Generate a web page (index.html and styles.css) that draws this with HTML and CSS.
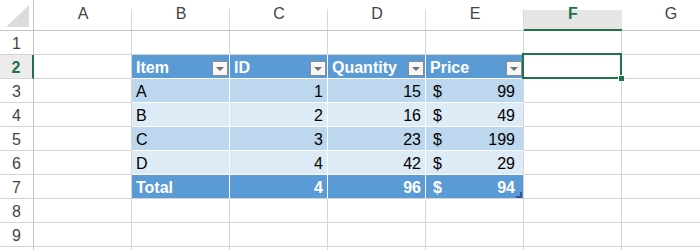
FILE: index.html
```html
<!DOCTYPE html>
<html lang="en">
<head>
  <meta charset="UTF-8">
  <title>Sheet</title>
  <link rel="stylesheet" href="styles.css">
</head>
<body>
  <div class="sheet">
    <!-- column headers -->
    <div class="corner">
      <svg width="34" height="31" viewBox="0 0 34 31"><polygon points="29,5 29,27 6,27" fill="#dcdcdc"/></svg>
    </div>
    <div class="ch">A</div>
    <div class="ch">B</div>
    <div class="ch">C</div>
    <div class="ch">D</div>
    <div class="ch">E</div>
    <div class="ch ch-active">F</div>
    <div class="ch">G</div>

    <!-- row 1 -->
    <div class="rh">1</div>
    <div class="c"></div><div class="c"></div><div class="c"></div><div class="c"></div><div class="c"></div><div class="c"></div><div class="c"></div>

    <!-- row 2 -->
    <div class="rh rh-active">2</div>
    <div class="c"></div>
    <div class="c th"><span>Item</span><span class="dd"></span></div>
    <div class="c th"><span>ID</span><span class="dd"></span></div>
    <div class="c th"><span>Quantity</span><span class="dd"></span></div>
    <div class="c th last"><span>Price</span><span class="dd"></span></div>
    <div class="c selected"><span class="handle"></span></div>
    <div class="c"></div>

    <!-- row 3 -->
    <div class="rh">3</div>
    <div class="c"></div>
    <div class="c td dark">A</div>
    <div class="c td dark num">1</div>
    <div class="c td dark num">15</div>
    <div class="c td dark last price"><span>$</span><span>99</span></div>
    <div class="c"></div><div class="c"></div>

    <!-- row 4 -->
    <div class="rh">4</div>
    <div class="c"></div>
    <div class="c td light">B</div>
    <div class="c td light num">2</div>
    <div class="c td light num">16</div>
    <div class="c td light last price"><span>$</span><span>49</span></div>
    <div class="c"></div><div class="c"></div>

    <!-- row 5 -->
    <div class="rh">5</div>
    <div class="c"></div>
    <div class="c td dark">C</div>
    <div class="c td dark num">3</div>
    <div class="c td dark num">23</div>
    <div class="c td dark last price"><span>$</span><span>199</span></div>
    <div class="c"></div><div class="c"></div>

    <!-- row 6 -->
    <div class="rh">6</div>
    <div class="c"></div>
    <div class="c td light">D</div>
    <div class="c td light num">4</div>
    <div class="c td light num">42</div>
    <div class="c td light last price"><span>$</span><span>29</span></div>
    <div class="c"></div><div class="c"></div>

    <!-- row 7: totals -->
    <div class="rh">7</div>
    <div class="c"></div>
    <div class="c total">Total</div>
    <div class="c total num">4</div>
    <div class="c total num">96</div>
    <div class="c total last price"><span>$</span><span>94</span>
      <svg class="resize" width="6" height="6" viewBox="0 0 6 6"><path d="M6 0V6H0V4H4V0Z" fill="#3b4ba3"/></svg>
    </div>
    <div class="c"></div><div class="c"></div>

    <!-- rows 8-9, and the top of the next row -->
    <div class="rh">8</div>
    <div class="c"></div><div class="c"></div><div class="c"></div><div class="c"></div><div class="c"></div><div class="c"></div><div class="c"></div>
    <div class="rh">9</div>
    <div class="c"></div><div class="c"></div><div class="c"></div><div class="c"></div><div class="c"></div><div class="c"></div><div class="c"></div>
    <div class="rh"></div>
    <div class="c"></div><div class="c"></div><div class="c"></div><div class="c"></div><div class="c"></div><div class="c"></div><div class="c"></div>
  </div>
</body>
</html>
```

FILE: styles.css
```css
body {
  margin: 0;
  overflow: hidden;
  background-color: #fff;
  font-family: 'Liberation Sans', Arial, sans-serif;
  font-size: 16px;
  color: #000;
}
.sheet {
  display: grid;
  grid-template-columns: 34px repeat(7, 98px);
  grid-template-rows: 31px;
  grid-auto-rows: 24px;
  width: 720px;
}
.corner {
  border-right: 1px solid #c6c6c6;
  border-bottom: 1px solid #c6c6c6;
  box-sizing: border-box;
}
.corner svg {
  display: block;
}
.ch {
  box-sizing: border-box;
  border-bottom: 1px solid #c6c6c6;
  padding-top: 3px;
  line-height: 21px;
  text-align: center;
  color: #444;
  background: linear-gradient(#d8d8d8, #d8d8d8) right bottom / 1px 21px no-repeat;
}
.ch-active {
  background: linear-gradient(#fff, #fff) top / 100% 10px no-repeat, #e6e6e6;
  border-bottom: 2px solid #217346;
  color: #217346;
  font-weight: bold;
}
.rh {
  box-sizing: border-box;
  border-right: 1px solid #c6c6c6;
  border-bottom: 1px solid #d4d4d4;
  padding-top: 2px;
  line-height: 21px;
  text-align: center;
  color: #444;
}
.rh-active {
  background-color: #ececec;
  border-right: 2px solid #217346;
  color: #217346;
  font-weight: bold;
}
.c {
  box-sizing: border-box;
  border-right: 1px solid #d4d4d4;
  border-bottom: 1px solid #d4d4d4;
  padding: 2px 4px 0;
  line-height: 21px;
  white-space: nowrap;
  overflow: hidden;
}
.td, .th {
  border-right-color: #fff;
  border-bottom-color: #fff;
}
.th, .total {
  background-color: #5b9bd5;
  color: #fff;
  font-weight: bold;
}
.total {
  border-right-color: #fff;
}
.last {
  border-right-color: #d4d4d4;
}
.th {
  display: flex;
  justify-content: space-between;
  align-items: flex-start;
  padding-right: 1px;
}
.dark {
  background-color: #bdd7ee;
}
.light {
  background-color: #ddebf7;
}
.num {
  text-align: right;
}
.price {
  display: flex;
  justify-content: space-between;
  padding-left: 7px;
  padding-right: 8px;
}
.dd {
  position: relative;
  width: 16px;
  height: 15px;
  margin-top: 4px;
  box-sizing: border-box;
  border: 1px solid #8c8c8c;
  background-color: #f7f7f7;
}
.dd::after {
  content: '';
  position: absolute;
  left: 3px;
  top: 5px;
  border-left: 4px solid transparent;
  border-right: 4px solid transparent;
  border-top: 4px solid #707070;
}
.selected {
  position: relative;
  overflow: visible;
}
.selected::after {
  content: '';
  position: absolute;
  top: -2px;
  left: -2px;
  right: -1px;
  bottom: -1px;
  border: 2px solid #217346;
}
.handle {
  position: absolute;
  left: 94px;
  top: 20px;
  width: 5px;
  height: 5px;
  background-color: #217346;
  border: 1px solid #fff;
  z-index: 2;
}
.total.price {
  position: relative;
}
.resize {
  position: absolute;
  right: 1px;
  bottom: 0;
}
```
